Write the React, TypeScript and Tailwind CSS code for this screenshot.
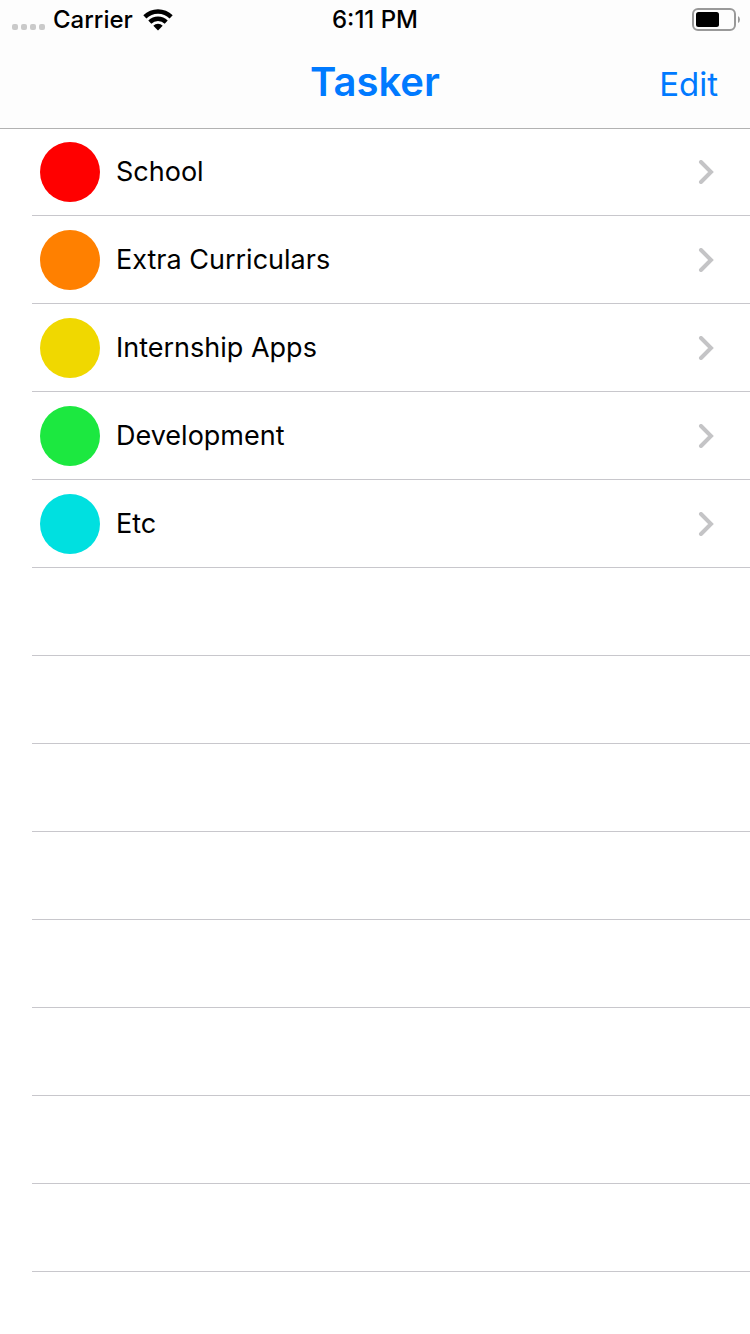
type Category = { name: string; swatch: string };

const categories: Category[] = [
  { name: "School", swatch: "bg-[#ff0000]" },
  { name: "Extra Curriculars", swatch: "bg-[#ff8000]" },
  { name: "Internship Apps", swatch: "bg-[#f0d800]" },
  { name: "Development", swatch: "bg-[#1ce840]" },
  { name: "Etc", swatch: "bg-[#00e0e0]" },
];

const EMPTY_ROWS = 8;

function WifiIcon() {
  return (
    <svg className="h-[22px] w-[30px]" viewBox="0 0 30 22" fill="currentColor" aria-hidden="true">
      <path d="M0.3 6.2A21 21 0 0 1 29.7 6.2L26.6 9.5A16.6 16.6 0 0 0 3.4 9.5Z" />
      <path d="M5.3 11.6A13.8 13.8 0 0 1 24.7 11.6L21.7 14.7A9.6 9.6 0 0 0 8.3 14.7Z" />
      <path d="M10.3 16.8A6.6 6.6 0 0 1 19.7 16.8L15 21.5Z" />
    </svg>
  );
}

function BatteryIcon() {
  return (
    <svg className="h-6 w-12" viewBox="0 0 48 24" aria-hidden="true">
      <rect x="1" y="1" width="42" height="21" rx="5" fill="none" stroke="#999999" strokeWidth="2" />
      <rect x="4" y="4" width="23" height="15" rx="2.5" fill="#000000" />
      <path d="M46 8Q48 9.2 48 11.5T46 15Z" fill="#999999" />
    </svg>
  );
}

function Chevron() {
  return (
    <svg className="h-6 w-4" viewBox="0 0 16 24" fill="none" aria-hidden="true">
      <path d="M3 2L13 12L3 22" stroke="#c4c4c6" strokeWidth="4" strokeLinecap="round" strokeLinejoin="miter" />
    </svg>
  );
}

function StatusBar() {
  return (
    <div className="grid h-10 grid-cols-3 items-center px-[10px] text-2xl leading-10 font-medium">
      <div className="flex items-center gap-[10px] pl-0.5">
        <div className="flex items-center gap-2">
          <div className="flex gap-[3px] pt-[14px]">
            <i className="size-[6px] rounded-xs bg-[#cacaca]" />
            <i className="size-[6px] rounded-xs bg-[#cacaca]" />
            <i className="size-[6px] rounded-xs bg-[#cacaca]" />
            <i className="size-[6px] rounded-xs bg-[#cacaca]" />
          </div>
          <span>Carrier</span>
        </div>
        <WifiIcon />
      </div>
      <time className="text-center">6:11 PM</time>
      <div className="flex justify-end">
        <BatteryIcon />
      </div>
    </div>
  );
}

export default function App() {
  return (
    <div className="min-h-screen bg-white font-['Inter','Liberation_Sans',sans-serif] text-black">
      <header className="border-b border-[#b2b2b2] bg-[#fdfdfd]">
        <StatusBar />
        <div className="grid h-22 grid-cols-3 items-center px-8 text-[#007aff]">
          <h1 className="col-start-2 pb-1 text-center text-[40px] leading-[48px] font-semibold">Tasker</h1>
          <button type="button" className="justify-self-end text-[33px] leading-[48px]">
            Edit
          </button>
        </div>
      </header>
      <main className="-mt-px">
        <ul className="pl-8">
          {categories.map((c) => (
            <li key={c.name} className="h-22 border-b border-[#c8c7cc]">
              <a href="#" className="flex h-full items-center gap-4 pt-px pr-9 pl-2">
                <span className={`size-15 shrink-0 rounded-full ${c.swatch}`} />
                <span className="grow text-[27px] leading-9">{c.name}</span>
                <Chevron />
              </a>
            </li>
          ))}
          {Array.from({ length: EMPTY_ROWS }, (_, i) => (
            <li key={i} className="h-22 border-b border-[#c8c7cc]" aria-hidden="true" />
          ))}
        </ul>
      </main>
    </div>
  );
}
